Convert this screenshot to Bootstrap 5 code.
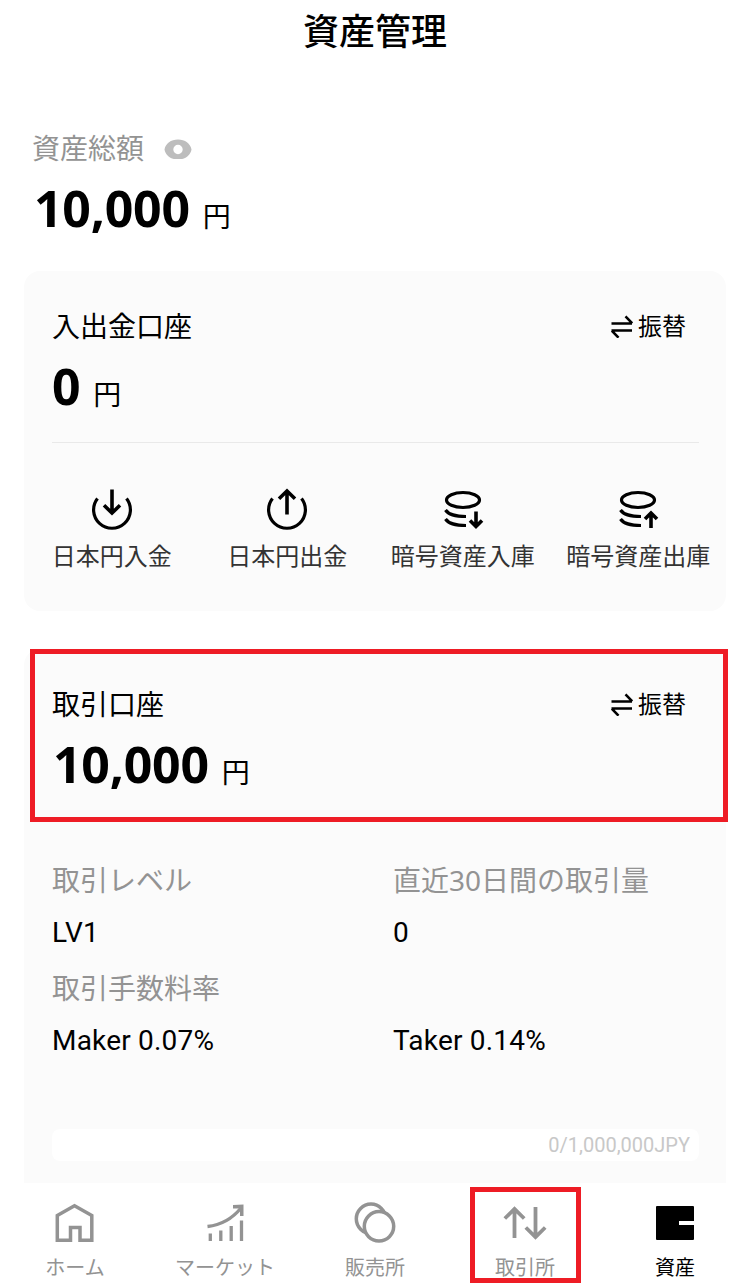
<!DOCTYPE html>
<html lang="ja">
<head>
<meta charset="utf-8">
<meta name="viewport" content="width=device-width, initial-scale=1">
<title>資産管理</title>
<link rel="stylesheet" href="https://cdn.jsdelivr.net/npm/bootstrap@5.3.0/dist/css/bootstrap.min.css">
<style>
  body { font-family: "Noto Sans", "Noto Sans CJK JP", sans-serif; color: #000; background: #fff; font-size: 28px; line-height: 40px; height: 1283px; overflow: hidden; }
  svg { display: block; flex: none; fill: none; stroke: currentColor; }
  .page-title { font-size: 36px; font-weight: 500; line-height: 64px; }
  .muted { color: #939393; }
  .total { padding: 64px 32px 0; }
  .amount { height: 60px; line-height: 60px; margin-top: 10px; gap: 13px; }
  .amount b { font-size: 50px; letter-spacing: -.25px; }
  .amount .long { margin-left: 1px; }
  .panel { background: #fbfbfb; margin: 0 24px; width: 702px; border-radius: 16px; position: relative; }
  .panel-top { padding: 35px 28px 0; }
  .transfer { font-size: 24px; gap: 5px; margin-right: 12px; }
  .rule { height: 1px; background: #e9e9e9; margin: 26px 27px 0 28px; }
  .action { font-size: 24px; line-height: 32px; color: #333; white-space: nowrap; }
  .action svg { color: #000; margin-bottom: 8px; }
  .info { padding: 66px 0 0 28px; }
  .info > div > div { width: 341px; flex: none; white-space: nowrap; }
  .latin { font-family: Roboto, "Noto Sans CJK JP", sans-serif; }
  .info .latin { letter-spacing: .2px; }
  .quota { background: #fff; height: 32px; line-height: 32px; border-radius: 8px; margin: 68px 27px 0 28px; padding-right: 9px; font-size: 20px; color: #c8c8c8; }
  .tabs { height: 100px; background: #fff; position: relative; }
  .tab { width: 150px; padding-top: 18px; font-size: 20px; line-height: 24px; color: #939393; position: relative; }
  .tab svg { margin-bottom: 11px; }
  .tab.current { color: #000; }
  .frame { position: absolute; border: 5px solid #ee1c25; }
  .frame-account { left: 6px; top: 0; width: 698px; height: 173px; }
  .frame-tab { left: 20px; top: 4px; width: 111px; height: 96px; }
</style>
</head>
<body>
<header class="page-title text-center">資産管理</header>

<section class="total">
  <div class="d-flex align-items-center muted">
    <span>資産総額</span>
    <svg width="28" height="22" viewBox="0 0 28 22" style="margin-left:20px"><path fill="#bdbdbd" stroke="none" fill-rule="evenodd" d="M.5 12.500C1.500 6.500 7 2.500 14 2.500s12.500 4 13.500 10C26.500 18.500 21 22.500 14 22.500S1.500 18.500 .5 12.500zM14 7.800a4.700 4.700 0 1 0 0 9.400 4.700 4.700 0 0 0 0-9.400z"/></svg>
  </div>
  <div class="amount d-flex align-items-baseline"><b class="long ms-0 ps-1" style="padding-left:2px!important">10,000</b><span>円</span></div>
</section>

<section class="panel" style="margin-top:33px;height:340px">
  <div class="panel-top">
    <div class="d-flex justify-content-between">
      <span>入出金口座</span>
      <span class="transfer d-flex align-items-center"><svg width="22" height="24" viewBox="0 0 22 24" stroke-width="2.500"><path d="M.5 9.500H21M14.500 2.300l6.700 7M21 16.500H.5M7.500 23.700l-6.700-7"/></svg>振替</span>
    </div>
    <div class="amount d-flex align-items-baseline"><b>0</b><span>円</span></div>
  </div>
  <div class="rule"></div>
  <div class="row g-0" style="padding-top:45px">
    <div class="col-3 action d-flex flex-column align-items-center">
      <svg width="44" height="44" viewBox="0 0 44 44" stroke-width="3.200"><path d="M7.500 10.500a18.400 18.400 0 1 0 29 0"/><path stroke-width="3.600" d="M22 1.500V25M14 17.300l8 7.700 8-7.700"/></svg>日本円入金</div>
    <div class="col-3 action d-flex flex-column align-items-center">
      <svg width="44" height="44" viewBox="0 0 44 44" stroke-width="3.200"><path d="M7.500 10.500a18.400 18.400 0 1 0 29 0"/><path stroke-width="3.600" d="M22 26.500V3M14 10.700L22 3l8 7.700"/></svg>日本円出金</div>
    <div class="col-3 action d-flex flex-column align-items-center">
      <svg width="44" height="44" viewBox="0 0 44 44" stroke-width="3.200"><ellipse cx="22" cy="12" rx="16.500" ry="7.500"/><path d="M4.500 22c3 4.500 11 6.500 20.500 6.500M4.500 31c3 4.500 11 6.500 20.500 6.500"/><path stroke-width="3.600" d="M35 23.500V38M29 32.500l6 6 6-6"/></svg>暗号資産入庫</div>
    <div class="col-3 action d-flex flex-column align-items-center">
      <svg width="44" height="44" viewBox="0 0 44 44" stroke-width="3.200"><ellipse cx="22" cy="12" rx="16.500" ry="7.500"/><path d="M4.500 22c3 4.500 11 6.500 20.500 6.500M4.500 31c3 4.500 11 6.500 20.500 6.500"/><path stroke-width="3.600" d="M35 40V25.500M29 31l6-6 6 6"/></svg>暗号資産出庫</div>
  </div>
</section>

<section class="panel rounded-bottom-0" style="margin-top:38px;height:534px">
  <div class="panel-top">
    <div class="d-flex justify-content-between">
      <span>取引口座</span>
      <span class="transfer d-flex align-items-center"><svg width="22" height="24" viewBox="0 0 22 24" stroke-width="2.500"><path d="M.5 9.500H21M14.500 2.300l6.700 7M21 16.500H.5M7.500 23.700l-6.700-7"/></svg>振替</span>
    </div>
    <div class="amount d-flex align-items-baseline"><b class="long">10,000</b><span>円</span></div>
  </div>
  <div class="info">
    <div class="d-flex muted"><div>取引レベル</div><div>直近30日間の取引量</div></div>
    <div class="d-flex latin" style="padding:13px 0 15px"><div>LV1</div><div>0</div></div>
    <div class="d-flex muted"><div>取引手数料率</div></div>
    <div class="d-flex latin" style="padding-top:13px"><div>Maker 0.07%</div><div>Taker 0.14%</div></div>
  </div>
  <div class="quota text-end latin">0/1,000,000JPY</div>
  <div class="frame frame-account"></div>
</section>

<nav class="tabs d-flex">
  <div class="tab d-flex flex-column align-items-center"><svg width="44" height="44" viewBox="0 0 44 44" stroke-width="3.500"><path d="M4.300 14.500L21.500 4.800l17.300 9.700v24.700H27V26.500h-9.500v12.700H4.300z"/></svg>ホーム</div>
  <div class="tab d-flex flex-column align-items-center"><svg width="44" height="44" viewBox="0 0 44 44" stroke-width="3.300"><path d="M7.300 40v-7.500M17.800 40V29.500M28.200 40V25M38.500 40V19.500M4.500 25.500C18 24 29 18 38 7"/><path fill="currentColor" stroke="none" d="M30 4l10.500-.5V15H37V7.500H30z"/></svg>マーケット</div>
  <div class="tab d-flex flex-column align-items-center"><svg width="44" height="44" viewBox="0 0 44 44" stroke-width="3.500"><circle cx="18" cy="17.800" r="14.700"/><circle cx="26" cy="25.300" r="14.700" fill="#fff"/></svg>販売所</div>
  <div class="tab d-flex flex-column align-items-center"><svg width="44" height="44" viewBox="0 0 44 44" stroke-width="3.800"><path d="M11.500 37V8M1.800 17.500L11.500 8l9.700 9.500M32.500 6v29M22.800 26.500l9.700 9.500 9.700-9.500"/></svg>取引所<div class="frame frame-tab"></div></div>
  <div class="tab current d-flex flex-column align-items-center"><svg width="44" height="44" viewBox="0 0 44 44"><path fill="currentColor" stroke="none" d="M4 5h36a1 1 0 0 1 1 1v14H26v4h15v14a1 1 0 0 1-1 1H4a1 1 0 0 1-1-1V6a1 1 0 0 1 1-1z"/></svg>資産</div>
</nav>
<script src="https://cdn.jsdelivr.net/npm/bootstrap@5.3.0/dist/js/bootstrap.bundle.min.js"></script>
</body>
</html>
